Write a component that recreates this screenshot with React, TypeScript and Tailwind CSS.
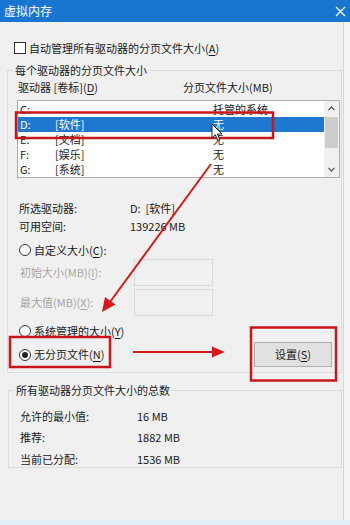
import React from "react";

const font = { fontFamily: '"Noto Sans CJK SC", "Noto Sans", sans-serif' };

function Key({ k }: { k: string }) {
  return <span className="underline underline-offset-2">{k}</span>;
}

function Radio({ checked }: { checked?: boolean }) {
  return (
    <span className="flex h-[12px] w-[12px] items-center justify-center rounded-full border border-[#333] bg-white">
      {checked && <span className="h-[6px] w-[6px] rounded-full bg-[#222]" />}
    </span>
  );
}

const drives = [
  { d: "C:", label: "", size: "托管的系统" },
  { d: "D:", label: "[软件]", size: "无", selected: true },
  { d: "E:", label: "[文档]", size: "无" },
  { d: "F:", label: "[娱乐]", size: "无" },
  { d: "G:", label: "[系统]", size: "无" },
];

export default function App() {
  return (
    <div className="relative h-[525px] w-[350px] overflow-hidden bg-[#f4f4f4] text-[11px] leading-none text-[#1a1a1a]" style={font}>
      <div className="flex h-[22px] items-center justify-between bg-[#1976d0] pl-[4px] pr-[4px] text-[12px] text-white">
        <span>虚拟内存</span>
        <svg width="11" height="11" viewBox="0 0 11 11" stroke="white" strokeWidth="1.3">
          <path d="M1 1 L10 10 M10 1 L1 10" />
        </svg>
      </div>

      <div className="flex h-[498px] w-[344px] flex-col border-r border-[#d8d8d8] bg-[#f0f0f0] pl-[7px] pr-[1px]">
        <div className="mt-[20px] flex h-[12px] items-center gap-[3px] pl-[7px]">
          <span className="h-[12px] w-[12px] border border-[#333] bg-white" />
          <span>自动管理所有驱动器的分页文件大小(<Key k="A" />)</span>
        </div>

        <fieldset className="mt-[9px] border border-[#dcdcdc] pb-[5px] pl-[9px] pr-[1px]">
          <legend className="ml-[-3px] px-[1px] leading-[14px]">每个驱动器的分页文件大小</legend>
          <div className="mt-[2px] flex h-[16px] items-center pl-[1px]">
            <span className="w-[165px]">驱动器 [卷标](<Key k="D" />)</span>
            <span>分页文件大小(MB)</span>
          </div>

          <div className="mt-[5px] flex h-[78px] border border-[#adadad] bg-white">
            <div className="flex-1 overflow-hidden pt-[1px]">
              {drives.map((r) => (
                <div
                  key={r.d}
                  className={`flex h-[15px] items-center pl-[2px] ${r.selected ? "bg-[#1e78d0] text-white" : ""}`}
                >
                  <span className="w-[35px]">{r.d}</span>
                  <span className="w-[158px]">{r.label}</span>
                  <span>{r.size}</span>
                </div>
              ))}
            </div>
            <div className="flex w-[15px] flex-col items-center bg-[#f0f0f0]">
              <span className="flex h-[15px] items-center">
                <svg width="7" height="5" viewBox="0 0 7 5" fill="none" stroke="#555" strokeWidth="1.2"><path d="M0.5 4.2 L3.5 1 L6.5 4.2" /></svg>
              </span>
              <span className="mt-[1px] h-[31px] w-[13px] bg-[#cdcdcd]" />
              <span className="flex-1" />
              <span className="flex h-[15px] items-center">
                <svg width="7" height="5" viewBox="0 0 7 5" fill="none" stroke="#555" strokeWidth="1.2"><path d="M0.5 0.8 L3.5 4 L6.5 0.8" /></svg>
              </span>
            </div>
          </div>

          <div className="mt-[21px] flex h-[18px] items-center pl-[2px]">
            <span className="w-[111px]">所选驱动器:</span>
            <span>D:&nbsp;&nbsp;[软件]</span>
          </div>
          <div className="flex h-[18px] items-center pl-[2px]">
            <span className="w-[111px]">可用空间:</span>
            <span>139226 MB</span>
          </div>

          <div className="mt-[6px] flex h-[18px] items-center gap-[3px] pl-[2px]">
            <Radio />
            <span>自定义大小(<Key k="C" />):</span>
          </div>
          <div className="flex h-[27px] items-center pl-[3px] text-[#a6a6a6]">
            <span className="w-[114px]">初始大小(MB)(<Key k="I" />):</span>
            <span className="h-[27px] w-[79px] border border-[#d9d9d9] bg-[#f0f0f0]" />
          </div>
          <div className="mt-[3px] flex h-[27px] items-center pl-[3px] text-[#a6a6a6]">
            <span className="w-[114px]">最大值(MB)(<Key k="X" />):</span>
            <span className="h-[27px] w-[79px] border border-[#d9d9d9] bg-[#f0f0f0]" />
          </div>

          <div className="mt-[6px] flex h-[18px] items-center gap-[3px] pl-[2px]">
            <Radio />
            <span>系统管理的大小(<Key k="Y" />)</span>
          </div>
          <div className="mt-[2px] flex h-[25px] items-center justify-between pl-[2px] pr-[8px]">
            <span className="flex items-center gap-[3px]">
              <Radio checked />
              <span>无分页文件(<Key k="N" />)</span>
            </span>
            <button className="flex h-[25px] w-[78px] items-center justify-center border border-[#adadad] bg-[#e1e1e1]">
              设置(<Key k="S" />)
            </button>
          </div>
        </fieldset>

        <fieldset className="ml-[1px] mt-[10px] border border-[#dcdcdc] pl-[11px]">
          <legend className="ml-[-5px] px-[1px] leading-[14px]">所有驱动器分页文件大小的总数</legend>
          <div className="mt-[11px] flex h-[16px] items-center">
            <span className="w-[117px]">允许的最小值:</span>
            <span>16 MB</span>
          </div>
          <div className="mt-[5px] flex h-[16px] items-center">
            <span className="w-[117px]">推荐:</span>
            <span>1882 MB</span>
          </div>
          <div className="mt-[6px] flex h-[16px] items-center">
            <span className="w-[117px]">当前已分配:</span>
            <span>1536 MB</span>
          </div>
        </fieldset>
      </div>
      <div className="h-[5px] bg-[#e4eef9]" />

      <svg className="pointer-events-none absolute left-0 top-0" width="350" height="525" viewBox="0 0 350 525">
        <g fill="none" stroke="#c9161c" strokeWidth="2.5">
          <rect x="16" y="112.5" width="257" height="25.5" />
          <rect x="10" y="337" width="100" height="30" />
          <rect x="251" y="327.5" width="85" height="53" />
        </g>
        <g stroke="#d41a1a" strokeWidth="2" fill="#d41a1a">
          <line x1="211" y1="164" x2="110" y2="302" />
          <polygon points="102,312 115.5,304.5 105,297" stroke="none" />
          <line x1="133" y1="352" x2="213" y2="352" />
          <polygon points="225,352 212,346.5 212,357.5" stroke="none" />
        </g>
        <path d="M212 124 L212 138 L215.3 134.8 L217.8 140.5 L219.9 139.6 L217.4 134 L222 134 Z" fill="white" stroke="#111" strokeWidth="0.9" />
      </svg>
    </div>
  );
}
